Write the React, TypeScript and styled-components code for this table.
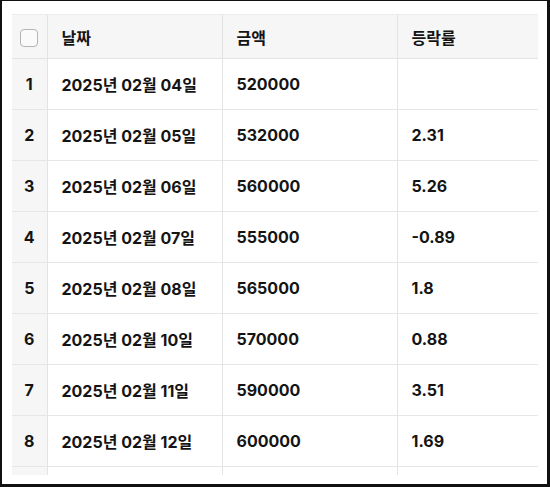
import React from "react";
import styled, { createGlobalStyle } from "styled-components";

const Global = createGlobalStyle`
  html, body { margin: 0; padding: 0; background: #fff; }
  * { box-sizing: border-box; }
`;

const Frame = styled.div`
  width: 550px;
  height: 487px;
  border-style: solid;
  border-color: #111;
  border-width: 1px 3px 3px 2px;
  padding: 13px 9px 0 10px;
  background: #fff;
  font-family: "Inter", "Noto Sans CJK KR", sans-serif;
  color: #141414;
`;

const Scroller = styled.div`
  height: 461px;
  overflow: hidden;
`;

const Table = styled.table`
  border-collapse: collapse;
  table-layout: fixed;
  width: 526px;
`;

const Head = styled.th<{ $w: number }>`
  width: ${(p) => p.$w}px;
  height: 44px;
  background: #f6f6f6;
  border-top: 1px solid #ececec;
  border-bottom: 1px solid #e3e3e3;
  border-left: 1px solid #e3e3e3;
  text-align: left;
  padding: 0 14px;
  font-size: 16px;
  font-weight: 700;
  &:first-child { border-left: none; padding: 0; text-align: center; }
`;

const Box = styled.span`
  display: inline-block;
  width: 18px;
  height: 18px;
  border: 1.5px solid #b4b4b4;
  border-radius: 4px;
  background: #fafafa;
  vertical-align: middle;
`;

const Cell = styled.td`
  height: 51px;
  border-bottom: 1px solid #e6e6e6;
  border-left: 1px solid #e3e3e3;
  padding: 0 14px;
  font-size: 16px;
  font-weight: 700;
  white-space: nowrap;
`;

const NumCell = styled.td`
  height: 51px;
  background: #f6f6f6;
  border-bottom: 1px solid #e6e6e6;
  text-align: center;
  font-size: 16px;
  font-weight: 700;
`;

const rows = [
  ["2025년 02월 04일", "520000", ""],
  ["2025년 02월 05일", "532000", "2.31"],
  ["2025년 02월 06일", "560000", "5.26"],
  ["2025년 02월 07일", "555000", "-0.89"],
  ["2025년 02월 08일", "565000", "1.8"],
  ["2025년 02월 10일", "570000", "0.88"],
  ["2025년 02월 11일", "590000", "3.51"],
  ["2025년 02월 12일", "600000", "1.69"],
];

export default function App() {
  return (
    <>
      <Global />
      <Frame>
        <Scroller>
          <Table>
            <thead>
              <tr>
                <Head $w={35}><Box /></Head>
                <Head $w={175}>날짜</Head>
                <Head $w={175}>금액</Head>
                <Head $w={141}>등락률</Head>
              </tr>
            </thead>
            <tbody>
              {rows.map((r, i) => (
                <tr key={i}>
                  <NumCell>{i + 1}</NumCell>
                  <Cell>{r[0]}</Cell>
                  <Cell>{r[1]}</Cell>
                  <Cell>{r[2]}</Cell>
                </tr>
              ))}
              <tr>
                <NumCell />
                <Cell />
                <Cell />
                <Cell />
              </tr>
            </tbody>
          </Table>
        </Scroller>
      </Frame>
    </>
  );
}
